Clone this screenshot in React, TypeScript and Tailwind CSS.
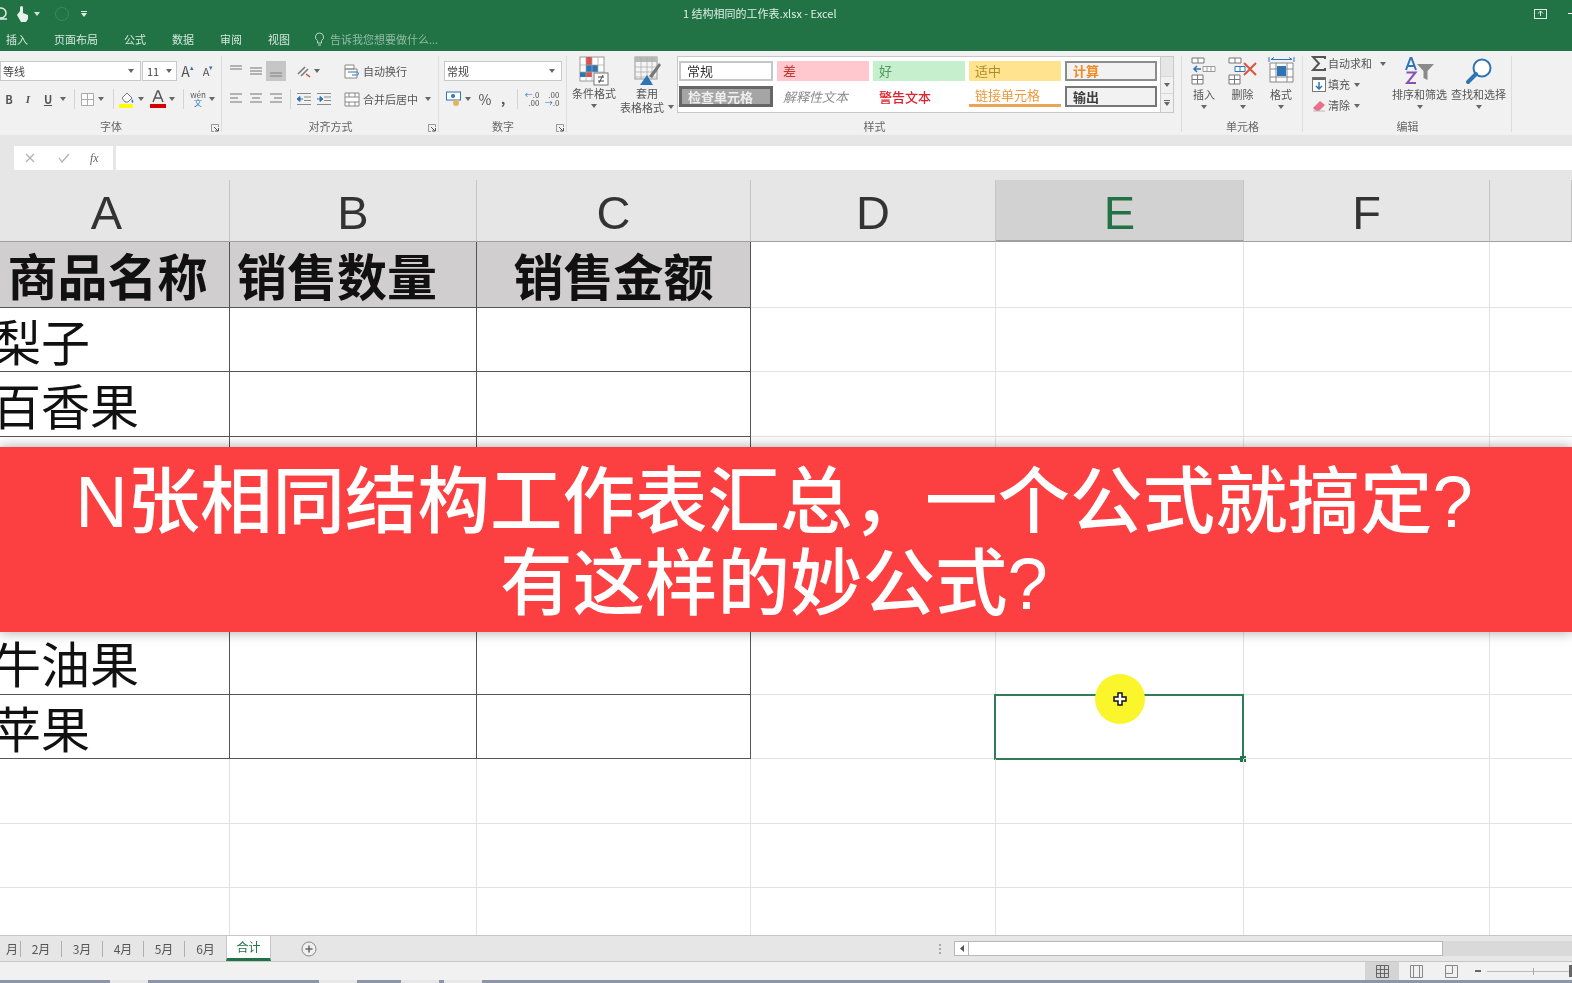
import type { ReactNode } from 'react'

const tabs = ['插入', '页面布局', '公式', '数据', '审阅', '视图']
const months = ['2月', '3月', '4月', '5月', '6月']
const columns = ['A', 'B', 'C', 'D', 'E', 'F', '']

const rows: { a: string; b?: string; c?: string }[] = [
  { a: '商品名称', b: '销售数量', c: '销售金额' },
  { a: '梨子' },
  { a: '百香果' },
  { a: '' },
  { a: '' },
  { a: '' },
  { a: '牛油果' },
  { a: '苹果' },
  { a: '' },
  { a: '' },
  { a: '' },
]

function Slot({ w, className = '', children }: { w: string; className?: string; children?: ReactNode }) {
  return <div className={`flex h-5 shrink-0 items-center justify-center ${w} ${className}`}>{children}</div>
}

function Arrow({ className = 'text-[#666]' }: { className?: string }) {
  return (
    <svg width="6" height="4" viewBox="0 0 6 4" className={className}>
      <path d="M0 0h6L3 4z" fill="currentColor" />
    </svg>
  )
}

function Sep() {
  return <div className="h-5 w-px bg-[#d4d4d4]" />
}

function Launcher() {
  return (
    <svg width="8" height="8" viewBox="0 0 8 8" className="absolute right-[3px] bottom-[3px]">
      <path d="M.5 3V.5H7.5V3M.5 .5V7.5H3" fill="none" stroke="#999" />
      <path d="M3 3l4 4M4 7h3.5V4" fill="none" stroke="#555" />
    </svg>
  )
}

function Lines({ ys, xs }: { ys: number[]; xs: [number, number][] }) {
  return (
    <svg width="16" height="14" viewBox="0 0 16 14">
      {ys.map((y, i) => (
        <path key={y} d={`M${xs[i][0]} ${y}H${xs[i][1]}`} stroke="#8a8a8a" strokeWidth="1.2" />
      ))}
    </svg>
  )
}

function Indent({ flip }: { flip?: boolean }) {
  return (
    <svg width="16" height="14" viewBox="0 0 16 14">
      <path d="M1 1.5h14M8 5h7M8 8.500h7M1 12.500h14" stroke="#8a8a8a" strokeWidth="1.200" />
      <path d={flip ? 'M1 7h3M4 4.500L7 7L4 9.500z' : 'M3 7h4M4 4.500L1 7L4 9.500z'} fill="#2e75b6" stroke="#2e75b6" />
    </svg>
  )
}

function CondFormatIcon() {
  return (
    <svg width="30" height="30" viewBox="0 0 30 30">
      <rect x="1" y="1" width="24" height="24" fill="#fff" stroke="#9a9a9a" />
      <rect x="7" y="1" width="6" height="8" fill="#d9534f" />
      <rect x="7" y="9" width="12" height="7" fill="#2e75b6" />
      <rect x="7" y="16" width="6" height="5" fill="#d9534f" />
      <rect x="1" y="16" width="6" height="5" fill="#2e75b6" />
      <path d="M7 1v24M13 1v24M19 1v15M1 9h24M1 16h24" stroke="#a8a8a8" strokeWidth=".7" />
      <rect x="15" y="17" width="14" height="12" fill="#fff" stroke="#777" />
      <path d="M19 21h6M19 25h6M24 19l-4 8" stroke="#444" />
    </svg>
  )
}

function TableFormatIcon() {
  return (
    <svg width="30" height="30" viewBox="0 0 30 30">
      <rect x="3" y="1" width="22" height="22" fill="#f4f4f4" stroke="#9a9a9a" />
      <rect x="3" y="1" width="22" height="5" fill="#b8b8b8" />
      <path d="M3 11h22M3 16h22M3 21h22M9 1v22M15 1v22M20 1v22" stroke="#a8a8a8" strokeWidth=".7" />
      <path d="M8 29L15 19L21 29z" fill="#2e75b6" />
      <path d="M17 20L27 7l2 2L20 22z" fill="#777" />
    </svg>
  )
}

function InsertCellsIcon() {
  return (
    <svg width="26" height="28" viewBox="0 0 26 28">
      <path d="M1 1h12v5H1zM7 1v5M1 18h11v9H1zM6.500 18v9M1 22.500h11" fill="#fff" stroke="#777" />
      <path d="M12 9.500h12v5H12zM16 9.500v5M20 9.500v5" fill="#fff" stroke="#999" />
      <path d="M3 12h7M6 9l-3 3 3 3" fill="none" stroke="#2e75b6" strokeWidth="1.500" />
    </svg>
  )
}

function DeleteCellsIcon() {
  return (
    <svg width="30" height="28" viewBox="0 0 30 28">
      <path d="M1 1h12v5H1zM7 1v5M1 18h11v9H1zM6.500 18v9M1 22.500h11" fill="#fff" stroke="#777" />
      <path d="M7 9.500h10v5H7zM12 9.500v5" fill="#fff" stroke="#2e75b6" />
      <path d="M16 6l12 12M28 6L16 18" stroke="#e0533c" strokeWidth="2" />
    </svg>
  )
}

function FormatCellsIcon() {
  return (
    <svg width="27" height="28" viewBox="0 0 27 28">
      <path d="M2 6h23v19H2zM8 6v19M19 6v19M2 12h23M2 20h23" fill="#fff" stroke="#888" />
      <rect x="9" y="9" width="9" height="10" fill="#2e75b6" />
      <path d="M1 0v5M26 0v5M3 2.500h21M3 2.500l3-2M24 2.500l-3-2" fill="none" stroke="#2e75b6" />
    </svg>
  )
}

function SortIcon() {
  return (
    <svg width="30" height="28" viewBox="0 0 30 28">
      <path d="M1 13L5.500 1h1L11 13M3 9h7" fill="none" stroke="#2e75b6" strokeWidth="2" />
      <path d="M1.500 15.500h9L2 26h9" fill="none" stroke="#8b4fb3" strokeWidth="2" />
      <path d="M12 7h17l-6.500 7v9l-4-2v-7z" fill="#8a8a8a" />
    </svg>
  )
}

function FindIcon() {
  return (
    <svg width="28" height="28" viewBox="0 0 28 28">
      <circle cx="17" cy="11" r="8.500" fill="#fff" stroke="#2e75b6" strokeWidth="2" />
      <path d="M11 17L3 25" stroke="#2e75b6" strokeWidth="4" strokeLinecap="round" />
    </svg>
  )
}

function TallButton({ w, lines, icon, arrowInline }: { w: string; lines: string[]; icon: ReactNode; arrowInline?: boolean }) {
  return (
    <div className={`flex shrink-0 flex-col items-center text-[11px] leading-[14px] text-[#555] ${w}`}>
      <div className="flex h-[30px] items-start justify-center">{icon}</div>
      {lines.map((line, i) => (
        <div key={line} className="flex items-center gap-1 whitespace-nowrap">
          {line}
          {arrowInline && i === lines.length - 1 && <Arrow />}
        </div>
      ))}
      {!arrowInline && (
        <div className="flex h-3 items-center">
          <Arrow />
        </div>
      )}
    </div>
  )
}

function Group({ w, label, launcher, children, top = 'pt-[10px]' }: { w: string; label: string; launcher?: boolean; children: ReactNode; top?: string }) {
  return (
    <div className={`relative flex h-full shrink-0 flex-col ${w}`}>
      <div className={`h-[68px] ${top}`}>{children}</div>
      <div className="flex h-[14px] items-center justify-center text-[11px] text-[#666]">{label}</div>
      {launcher && <Launcher />}
      <div className="absolute top-[5px] right-0 bottom-[3px] w-px bg-[#dcdcdc]" />
    </div>
  )
}

function FontGroup() {
  return (
    <Group w="w-[222px]" label="字体" launcher>
      <div className="flex items-center">
        <div className="flex h-5 w-[141px] items-center justify-between border border-[#c8c8c8] bg-white pr-1.5 pl-0.5 text-[11px] text-[#444]">
          等线
          <Arrow />
        </div>
        <div className="ml-px flex h-5 w-[35px] items-center justify-between border border-[#c8c8c8] bg-white px-1 text-[11px] text-[#444]">
          11
          <Arrow />
        </div>
        <Slot w="w-[21px]" className="text-[14px] text-[#555]">
          A<span className="mb-2 text-[7px] text-[#2e75b6]">▴</span>
        </Slot>
        <Slot w="w-[20px]" className="text-[11px] text-[#555]">
          A<span className="mb-2 text-[7px] text-[#2e75b6]">▾</span>
        </Slot>
      </div>
      <div className="mt-2 flex items-center text-[11px] text-[#555]">
        <Slot w="w-[18px]" className="font-bold">B</Slot>
        <Slot w="w-[20px]" className="font-['Liberation_Serif',serif] font-bold italic">I</Slot>
        <Slot w="w-[20px]" className="font-bold underline">U</Slot>
        <Slot w="w-[10px]"><Arrow /></Slot>
        <Slot w="w-[12px]"><Sep /></Slot>
        <Slot w="w-[14px]">
          <svg width="13" height="13" viewBox="0 0 13 13">
            <path d="M.5 .5h12v12H.5zM6.500 .5v12M.5 6.500h12" fill="#fff" stroke="#aaa" />
          </svg>
        </Slot>
        <Slot w="w-[13px]"><Arrow /></Slot>
        <Slot w="w-[12px]"><Sep /></Slot>
        <Slot w="w-[16px]">
          <svg width="16" height="18" viewBox="0 0 16 18">
            <path d="M3 8l5-5 5 5-4 4H6z" fill="#fff" stroke="#777" />
            <path d="M13 9c1 1.500 2 2.500 1 3.500s-2-.5-1-3.500z" fill="#2e75b6" />
            <rect y="14" width="14" height="4" fill="#ffff00" />
          </svg>
        </Slot>
        <Slot w="w-[10px]" className="ml-px"><Arrow /></Slot>
        <Slot w="w-[16px]" className="ml-1">
          <svg width="16" height="18" viewBox="0 0 16 18">
            <path d="M3 12L7.500 1h1L13 12M5 8h6" fill="none" stroke="#555" strokeWidth="1.500" />
            <rect y="14" width="16" height="4" fill="#d40000" />
          </svg>
        </Slot>
        <Slot w="w-[10px]" className="ml-px"><Arrow /></Slot>
        <Slot w="w-[12px]"><Sep /></Slot>
        <Slot w="w-[16px]" className="ml-px">
          <div className="flex flex-col items-center text-[8px] leading-[8px]">
            <span>wén</span>
            <span className="text-[#2e75b6]">文</span>
          </div>
        </Slot>
        <Slot w="w-[10px]" className="ml-px"><Arrow /></Slot>
      </div>
    </Group>
  )
}

function AlignGroup() {
  return (
    <Group w="w-[217px]" label="对齐方式" launcher>
      <div className="flex items-center pl-1 text-[11px] text-[#555]">
        <Slot w="w-[20px]"><Lines ys={[2, 5]} xs={[[2, 14], [2, 14]]} /></Slot>
        <Slot w="w-[20px]"><Lines ys={[4, 7, 10]} xs={[[2, 14], [2, 14], [2, 14]]} /></Slot>
        <Slot w="w-[20px]" className="bg-[#c6c6c6]"><Lines ys={[9, 12]} xs={[[2, 14], [2, 14]]} /></Slot>
        <Slot w="w-[16px]" className="ml-2.5">
          <svg width="16" height="14" viewBox="0 0 16 14">
            <path d="M2 10L9 3M5 12l7-7" stroke="#777" strokeWidth="1.500" fill="none" />
            <path d="M10 10l4 3" stroke="#c0504d" strokeWidth="1.500" />
          </svg>
        </Slot>
        <Slot w="w-[10px]"><Arrow /></Slot>
        <Slot w="w-[16px]" className="ml-[22px]">
          <svg width="16" height="15" viewBox="0 0 16 15">
            <path d="M1 1h9v4H1zM1 5h12v9H1z" fill="#fff" stroke="#888" />
            <path d="M4 8h9c2 0 2 3 0 3H8" fill="none" stroke="#2e75b6" />
          </svg>
        </Slot>
        <span className="ml-[3px]">自动换行</span>
      </div>
      <div className="mt-2 flex items-center pl-1 text-[11px] text-[#555]">
        <Slot w="w-[20px]"><Lines ys={[2, 6, 10]} xs={[[2, 14], [2, 10], [2, 14]]} /></Slot>
        <Slot w="w-[20px]"><Lines ys={[2, 6, 10]} xs={[[2, 14], [4, 12], [2, 14]]} /></Slot>
        <Slot w="w-[20px]"><Lines ys={[2, 6, 10]} xs={[[2, 14], [6, 14], [2, 14]]} /></Slot>
        <Slot w="w-[8px]"><Sep /></Slot>
        <Slot w="w-[20px]"><Indent /></Slot>
        <Slot w="w-[20px]"><Indent flip /></Slot>
        <Slot w="w-[16px]" className="ml-2.5">
          <svg width="16" height="15" viewBox="0 0 16 15">
            <path d="M1 1h14v13H1zM1 5h14M1 10h14M5 1v4M5 10v4M11 1v4M11 10v4" fill="#fff" stroke="#888" />
          </svg>
        </Slot>
        <span className="ml-[3px] w-[53px] whitespace-nowrap">合并后居中</span>
        <Slot w="w-[10px]" className="ml-[7px]"><Arrow /></Slot>
      </div>
    </Group>
  )
}

function NumberGroup() {
  return (
    <Group w="w-[128px]" label="数字" launcher>
      <div className="ml-[5px] flex h-5 w-[118px] items-center justify-between border border-[#c8c8c8] bg-white pr-1.5 pl-0.5 text-[11px] text-[#444]">
        常规
        <Arrow />
      </div>
      <div className="mt-2 flex items-center pl-[7px] text-[#555]">
        <Slot w="w-[16px]">
          <svg width="16" height="16" viewBox="0 0 16 16">
            <rect x=".5" y="1" width="14" height="8" fill="#fff" stroke="#2e75b6" />
            <circle cx="7" cy="5" r="2" fill="#2e75b6" />
            <circle cx="10" cy="12" r="3" fill="#e6b45c" />
          </svg>
        </Slot>
        <Slot w="w-[10px]" className="ml-px"><Arrow /></Slot>
        <Slot w="w-[20px]" className="ml-0.5 text-[14px]">%</Slot>
        <Slot w="w-[16px]" className="text-[13px] font-bold">,</Slot>
        <Slot w="w-[12px]"><Sep /></Slot>
        <Slot w="w-[18px]" className="text-[8px] leading-[8px]">
          <div className="text-right"><span className="text-[#2e75b6]">←</span>.0<br />.00</div>
        </Slot>
        <Slot w="w-[22px]" className="text-[8px] leading-[8px]">
          <div className="text-right">.00<br /><span className="text-[#2e75b6]">→</span>.0</div>
        </Slot>
      </div>
    </Group>
  )
}

const galleryCells = [
  { text: '常规', className: 'border-2 border-[#c6c6c6] bg-white text-[#333]' },
  { text: '差', className: 'bg-[#ffc7ce] text-[#c0392f]' },
  { text: '好', className: 'bg-[#c6efce] text-[#4f9a5b]' },
  { text: '适中', className: 'bg-[#ffe38f] text-[#b08a2a]' },
  { text: '计算', className: 'border-2 border-[#8c8c8c] bg-[#f2f2f2] font-semibold text-[#f08a24]' },
  { text: '检查单元格', className: 'border-[3px] border-[#666] bg-[#a5a5a5] font-semibold text-[#eee]' },
  { text: '解释性文本', className: 'italic text-[#8a8a8a]' },
  { text: '警告文本', className: 'font-medium text-[#e0202c]' },
  { text: '链接单元格', className: 'border-b-[3px] border-[#eaa458] text-[#ee9a3a]' },
  { text: '输出', className: 'border-2 border-[#777] bg-[#f2f2f2] font-semibold text-[#3f3f3f]' },
]

function StylesGroup() {
  return (
    <Group w="w-[615px]" label="样式" top="pt-[5px]">
      <div className="flex items-start">
        <TallButton w="w-[54px]" lines={['条件格式']} icon={<CondFormatIcon />} />
        <TallButton w="w-[52px]" lines={['套用', '表格格式']} icon={<TableFormatIcon />} arrowInline />
        <div className="ml-1 flex h-[57px] items-stretch">
          <div className="w-[484px] border border-[#c8c8c8] bg-white pt-1 pl-px">
            <div className="grid grid-cols-[94px_92px_92px_92px_92px] grid-rows-[20px_21px] gap-x-1 gap-y-[5px]">
              {galleryCells.map((cell) => (
                <div key={cell.text} className={`flex items-center pl-1.5 text-[13px] whitespace-nowrap ${cell.className}`}>
                  {cell.text}
                </div>
              ))}
            </div>
          </div>
          <div className="flex w-[13px] flex-col border-y border-r border-[#c8c8c8] text-[#666]">
            <div className="flex h-[19px] items-center justify-center bg-[#e6e6e6]" />
            <div className="flex h-[18px] items-center justify-center border-y border-[#d8d8d8]"><Arrow /></div>
            <div className="flex flex-1 flex-col items-center justify-center gap-px">
              <div className="h-px w-1.5 bg-[#666]" />
              <Arrow />
            </div>
          </div>
        </div>
      </div>
    </Group>
  )
}

function CellsGroup() {
  return (
    <Group w="w-[121px]" label="单元格" top="pt-[6px]">
      <div className="flex pl-[3px]">
        <TallButton w="w-[38px]" lines={['插入']} icon={<InsertCellsIcon />} />
        <TallButton w="w-[39px]" lines={['删除']} icon={<DeleteCellsIcon />} />
        <TallButton w="w-[38px]" lines={['格式']} icon={<FormatCellsIcon />} />
      </div>
    </Group>
  )
}

function EditRow({ icon, label, wide }: { icon: ReactNode; label: string; wide?: boolean }) {
  return (
    <div className="flex h-[21px] items-center text-[11px] text-[#555]">
      <div className="flex w-[25px] justify-center pl-1.5">{icon}</div>
      <span className="whitespace-nowrap">{label}</span>
      <span className={wide ? 'ml-2' : 'ml-1'}>
        <Arrow />
      </span>
    </div>
  )
}

function EditGroup() {
  return (
    <Group w="w-[209px]" label="编辑" top="pt-[2px]">
      <div className="flex items-start">
        <div className="w-[87px] shrink-0">
          <EditRow
            wide
            label="自动求和"
            icon={
              <svg width="15" height="15" viewBox="0 0 15 15">
                <path d="M14 3V1H2l6 6.500L2 14h12v-2" fill="none" stroke="#555" strokeWidth="2" />
              </svg>
            }
          />
          <EditRow
            label="填充"
            icon={
              <svg width="14" height="15" viewBox="0 0 14 15">
                <rect x=".5" y=".5" width="13" height="14" fill="#fff" stroke="#777" />
                <rect x=".5" y=".5" width="13" height="2.500" fill="#666" />
                <path d="M7 5v7M4 9l3 3 3-3" fill="none" stroke="#2e75b6" strokeWidth="1.500" />
              </svg>
            }
          />
          <EditRow
            label="清除"
            icon={
              <svg width="14" height="12" viewBox="0 0 14 12">
                <path d="M1 8l7-7 5 4-6 6H4z" fill="#e8708a" />
                <path d="M1 11h12" stroke="#bbb" />
              </svg>
            }
          />
        </div>
        <div className="mt-1 flex">
          <TallButton w="w-[59px]" lines={['排序和筛选']} icon={<SortIcon />} />
          <TallButton w="w-[59px]" lines={['查找和选择']} icon={<FindIcon />} />
        </div>
      </div>
    </Group>
  )
}

function TitleBar() {
  return (
    <header className="h-[51px] shrink-0 bg-[#217346] text-[#dfeee5] blur-[0.4px]">
      <div className="flex h-[27px] items-center">
        <div className="flex w-[683px] items-center">
          <svg width="8" height="14" viewBox="0 0 8 14">
            <circle cx="1" cy="6" r="5" fill="none" stroke="#e6f1ea" strokeWidth="1.500" />
            <path d="M0 12h7" stroke="#e6f1ea" strokeWidth="1.500" />
          </svg>
          <svg width="14" height="18" viewBox="0 0 14 18" className="ml-2">
            <path d="M4 6V2.500a1.500 1.500 0 0 1 3 0V8l5 2v4l-2 3H5L1 10z" fill="#e6f1ea" />
          </svg>
          <span className="ml-1"><Arrow className="text-[#cfe3d7]" /></span>
          <div className="ml-[15px] size-3.5 rounded-full border border-[#3e8a60]" />
          <div className="ml-[12px] flex flex-col items-center gap-px">
            <div className="h-px w-1.5 bg-[#dfeee5]" />
            <Arrow className="text-[#dfeee5]" />
          </div>
        </div>
        <div className="text-[11px] whitespace-nowrap">1 结构相同的工作表.xlsx - Excel</div>
        <div className="ml-auto flex items-center gap-[21px]">
          <svg width="13" height="10" viewBox="0 0 13 10">
            <rect x=".5" y=".5" width="12" height="9" fill="none" stroke="#dfeee5" />
            <path d="M6.500 2v5M4 4.500L6.500 2 9 4.500" fill="none" stroke="#dfeee5" />
          </svg>
          <div className="h-px w-1 bg-white" />
        </div>
      </div>
      <nav className="flex h-6 items-center pl-1.5 text-[11px] text-[#d5e7dc]">
        <div className="flex gap-[26px]">
          {tabs.map((tab) => (
            <span key={tab}>{tab}</span>
          ))}
        </div>
        <svg width="11" height="14" viewBox="0 0 11 14" className="ml-[24px] text-[#b9d6c5]">
          <path d="M5.500 1a4 4 0 0 0-2 7.500V11h4V8.500a4 4 0 0 0-2-7.500zM4 13h3" fill="none" stroke="currentColor" />
        </svg>
        <span className="ml-[5px] text-[#8fbda2]">告诉我您想要做什么...</span>
      </nav>
    </header>
  )
}

function FormulaBar() {
  return (
    <div className="flex h-[45px] shrink-0 items-start bg-[#e6e6e6] pt-[11px] pl-[14px]">
      <div className="flex h-6 w-[99px] items-center bg-white text-[#b0b0b0]">
        <svg width="10" height="10" viewBox="0 0 10 10" className="ml-[11px]">
          <path d="M1 1l8 8M9 1L1 9" stroke="currentColor" strokeWidth="1.200" />
        </svg>
        <svg width="12" height="10" viewBox="0 0 12 10" className="ml-[23px]">
          <path d="M1 5l3 4 7-8" fill="none" stroke="currentColor" strokeWidth="1.200" />
        </svg>
        <span className="ml-[20px] font-['Liberation_Serif',serif] text-[12px] text-[#666] italic">fx</span>
      </div>
      <div className="ml-[3px] h-6 flex-1 bg-white" />
    </div>
  )
}

const colWidths = 'grid-cols-[230px_247px_274px_245px_248px_246px_1fr]'

function CellSelection() {
  return (
    <>
      <div className="absolute -top-px -right-px -bottom-[2px] -left-[2px] border-2 border-[#2f7d55]" />
      <div className="absolute -right-[3px] -bottom-1 size-[6px] bg-[#217346]" />
      <div className="absolute -top-[21px] left-[99px] flex size-[50px] items-center justify-center rounded-full bg-[#fbf52c]">
        <svg width="14" height="14" viewBox="0 0 14 14">
          <path d="M5 1h4v4h4v4H9v4H5V9H1V5h4z" fill="#fff" stroke="#111" strokeWidth="1.500" />
        </svg>
      </div>
    </>
  )
}

function Sheet() {
  return (
    <main className="relative min-h-0 flex-1 overflow-hidden text-[#111]">
      <div className={`grid h-[62px] ${colWidths} bg-[#e6e6e6]`}>
        {columns.map((col) => (
          <div
            key={col}
            className={`flex items-center justify-center border-r border-b border-[#c4c4c4] border-b-[#a0a0a0] pt-1 font-['Liberation_Sans',sans-serif] text-[47px] leading-none ${
              col === 'E' ? 'border-b-2 border-b-[#217346] bg-[#d2d2d2] text-[#217346]' : 'text-[#333]'
            } ${col === 'A' ? 'pr-4' : ''}`}
          >
            {col}
          </div>
        ))}
      </div>
      {rows.map((row, r) => {
        const inTable = r < 8
        const tableBorder = inTable ? 'border-r border-b border-[#555]' : 'border-r border-b border-[#e2e2e2]'
        const cellClass = `flex items-center ${tableBorder} ${r === 0 ? 'bg-[#d0cece] justify-center font-semibold' : ''}`
        return (
          <div key={r} className={`grid ${r === 0 ? 'h-[65.500px] text-[50px]' : 'h-[64.500px] text-[49px]'} ${colWidths} leading-none`}>
            <div className={`${cellClass} ${r === 0 ? 'pr-[14px]' : ''}`}>
              <span className={r === 0 ? 'whitespace-nowrap' : '-ml-2 whitespace-nowrap'}>{row.a}</span>
            </div>
            <div className={`${cellClass} ${r === 0 ? 'pr-[32px] whitespace-nowrap' : ''}`}>{row.b}</div>
            <div className={`${cellClass} whitespace-nowrap`}>{row.c}</div>
            {[0, 1, 2, 3].map((c) => (
              <div key={c} className={`relative ${c === 3 ? 'border-b' : 'border-r border-b'} border-[#e2e2e2]`}>
                {c === 1 && r === 7 && <CellSelection />}
              </div>
            ))}
          </div>
        )
      })}
    </main>
  )
}

function SheetTabs() {
  return (
    <div className="flex h-[27px] shrink-0 items-center border-y border-[#c6c6c6] bg-[#e6e6e6] text-[12px] text-[#555]">
      <span className="flex h-4 w-[21px] items-center justify-end border-r border-[#b0b0b0] pr-0.5">月</span>
      {months.map((m) => (
        <span key={m} className={`flex h-4 w-[41px] items-center justify-center ${m === '6月' ? '' : 'border-r border-[#b0b0b0]'}`}>
          {m}
        </span>
      ))}
      <div className="-mt-px flex h-[25px] w-[45px] items-center justify-center border-x border-[#c6c6c6] border-b-[3px] border-b-[#217346] bg-white text-[12px] text-[#217346]">
        合计
      </div>
      <svg width="16" height="16" viewBox="0 0 16 16" className="ml-[30px]">
        <circle cx="8" cy="8" r="7" fill="#f0f0f0" stroke="#888" />
        <path d="M8 4.500v7M4.500 8h7" stroke="#666" strokeWidth="1.500" />
      </svg>
      <div className="ml-[622px] flex flex-col gap-0.5">
        {[0, 1, 2].map((d) => (
          <div key={d} className="size-[2px] bg-[#aaa]" />
        ))}
      </div>
      <div className="ml-[13px] flex h-[15px] w-[15px] items-center justify-center border border-[#b8b8b8] bg-white">
        <svg width="4" height="7" viewBox="0 0 4 7">
          <path d="M4 0v7L0 3.500z" fill="#555" />
        </svg>
      </div>
      <div className="h-[15px] w-[474px] border border-l-0 border-[#b8b8b8] bg-white" />
      <div className="h-[15px] flex-1 bg-[#d9d9d9]" />
    </div>
  )
}

function StatusBar() {
  return (
    <footer className="flex h-[18px] shrink-0 items-center justify-end bg-[#f1f1f1] text-[#777]">
      <div className="flex h-full w-[34px] items-center justify-center bg-[#d4d4d4]">
        <svg width="13" height="13" viewBox="0 0 13 13">
          <path d="M.5 .5h12v12H.5zM4.500 .5v12M8.500 .5v12M.5 4.500h12M.5 8.500h12" fill="none" stroke="#666" />
        </svg>
      </div>
      <div className="flex w-[35px] justify-center">
        <svg width="13" height="13" viewBox="0 0 13 13">
          <path d="M.5 .5h12v12H.5zM3.500 .5v12M9.500 .5v12" fill="none" stroke="#888" />
        </svg>
      </div>
      <div className="flex w-[34px] justify-center">
        <svg width="13" height="13" viewBox="0 0 13 13">
          <path d="M.5 .5h12v12H.5zM.5 8.500h7v-8" fill="none" stroke="#888" />
        </svg>
      </div>
      <div className="ml-[7px] h-0.5 w-1.5 bg-[#666]" />
      <div className="relative ml-1.5 h-px w-[85px] bg-[#bbb]">
        <div className="absolute top-[-3px] left-[46px] h-[7px] w-px bg-[#aaa]" />
        <div className="absolute top-[-6px] right-0 h-3 w-[3px] bg-[#666]" />
      </div>
    </footer>
  )
}

function Taskbar() {
  return (
    <div className="flex h-[3px] shrink-0 bg-[#8c96a8]">
      <div className="ml-[110px] h-full w-[38px] bg-[#e8e8e8]" />
      <div className="ml-[171px] h-full w-[38px] bg-[#e8e8e8]" />
      <div className="ml-[44px] h-full w-[38px] bg-[#e8e8e8]" />
      <div className="ml-[5px] h-full w-[38px] bg-[#e8e8e8]" />
    </div>
  )
}

export default function App() {
  return (
    <div className="relative flex h-[983px] w-[1572px] flex-col overflow-hidden bg-white font-['Noto_Sans_CJK_SC',sans-serif] blur-[0.5px]">
      <TitleBar />
      <div className="flex h-[84px] shrink-0 bg-[#f1f1f1] blur-[0.5px]">
        <FontGroup />
        <AlignGroup />
        <NumberGroup />
        <StylesGroup />
        <CellsGroup />
        <EditGroup />
      </div>
      <FormulaBar />
      <Sheet />
      <SheetTabs />
      <StatusBar />
      <Taskbar />

      {/* Video caption banner */}
      <div className="absolute inset-x-0 top-[447px] flex h-[185px] flex-col items-center justify-center bg-[#fc3f41] pt-1.5 pr-6 text-center font-['Liberation_Sans','Noto_Sans_CJK_SC',sans-serif] text-[72.500px] leading-[82px] text-white shadow-[0_0_12px_rgba(0,0,0,0.35)]">
        <div className="whitespace-nowrap font-medium">N张相同结构工作表汇总，一个公式就搞定?</div>
        <div className="whitespace-nowrap font-medium">有这样的妙公式?</div>
      </div>
    </div>
  )
}
